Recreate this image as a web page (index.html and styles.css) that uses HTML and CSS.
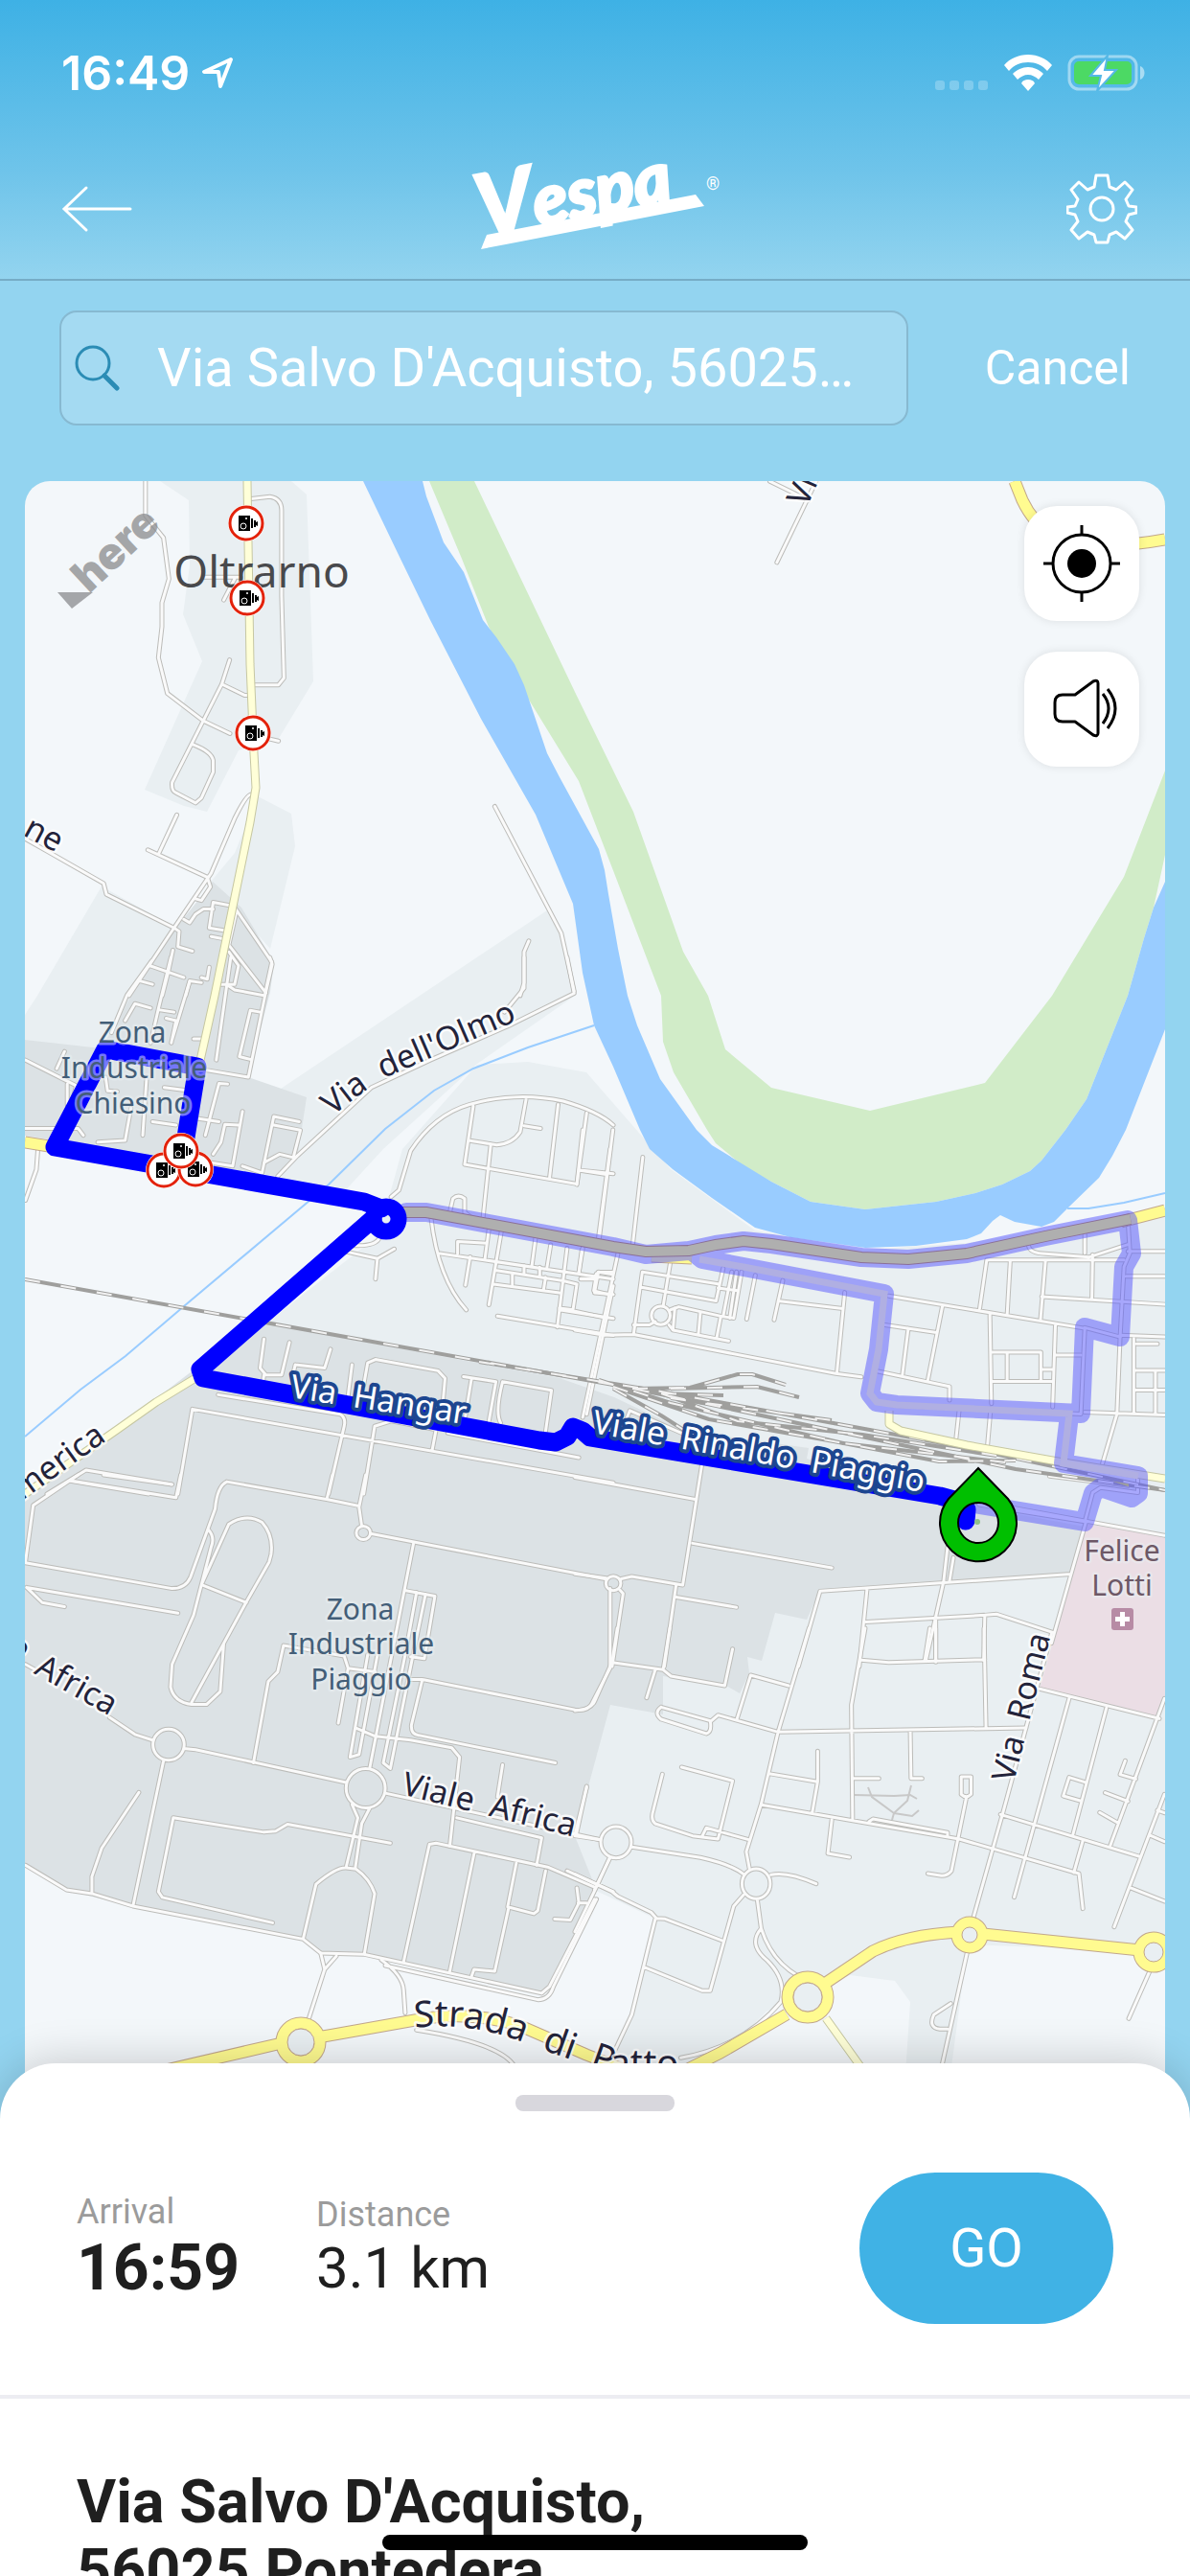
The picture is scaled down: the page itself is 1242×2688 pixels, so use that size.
FILE: index.html
```html
<!DOCTYPE html>
<html lang="en">
<head>
  <meta charset="UTF-8">
  <title>Vespa | Navigation</title>
  <meta name="viewport" content="width=device-width, initial-scale=1.0">
  <link rel="stylesheet" href="styles.css">
</head>
<body>
  <div class="app">
    <header class="header">
      <div class="status">
        <div class="status-left">
          <span>16:49</span>
          <svg width="34" height="34" viewBox="0 0 34 34" fill="none" stroke="#fff" stroke-width="4" stroke-linejoin="round"><path d="M31 3L3 16h15l2 15z"/></svg>
        </div>
        <div class="status-right">
          <svg width="56" height="38" viewBox="0 0 56 38" fill="#fff" fill-opacity=".25"><rect x="0" y="27" width="10" height="10" rx="3"/><rect x="15" y="27" width="10" height="10" rx="3"/><rect x="30" y="27" width="10" height="10" rx="3"/><rect x="45" y="27" width="10" height="10" rx="3"/></svg>
          <svg width="50" height="38" viewBox="0 0 50 38" fill="#fff"><path d="M25 0C15 0 6 4 0 11l5 6c5-6 12-9 20-9s15 3 20 9l5-6C44 4 35 0 25 0z"/><path d="M25 13c-6 0-12 3-16 7l5 6c3-3 7-5 11-5s8 2 11 5l5-6c-4-4-10-7-16-7z"/><path d="M25 26c-3 0-6 1-7 4l7 8 7-8c-1-3-4-4-7-4z"/></svg>
          <svg width="82" height="38" viewBox="0 0 82 38"><rect x="2" y="2" width="70" height="34" rx="10" fill="none" stroke="#fff" stroke-opacity=".45" stroke-width="3"/><path d="M76 12c6 2 6 12 0 14z" fill="#fff" fill-opacity=".5"/><rect x="7" y="7" width="60" height="24" rx="5" fill="#4cd964"/><path d="M42 1L24 22h11l-4 16 20-22H39z" fill="#fff" stroke="#55b8e6" stroke-width="2"/></svg>
        </div>
      </div>
      <div class="navbar">
        <button type="button" class="icon-btn" aria-label="Back">
          <svg width="74" height="50" viewBox="0 0 74 50" fill="none" stroke="#fff" stroke-width="3" stroke-linecap="round"><path d="M72 25H3M26 3L3 25l23 22"/></svg>
        </button>
        <svg class="logo" width="250" height="84" viewBox="0 0 250 84" fill="#fff" role="img" aria-label="Vespa">
          <path d="M10 69L228 27l9 12L4 84z"/>
          <g transform="translate(5 72) rotate(-11)">
            <text class="logo-text"><tspan class="logo-v">V</tspan><tspan>espa</tspan></text>
          </g>
          <text class="logo-reg" x="239" y="22">®</text>
        </svg>
        <button type="button" class="icon-btn" aria-label="Settings">
          <svg width="74" height="74" viewBox="0 0 74 74" fill="none" stroke="#fff" stroke-width="3" stroke-linejoin="round"><path d="M31 2h12l2 12 7 3 9-8 8 8-7 10 3 7 8 1v6l-8 2-3 7 7 9-8 9-9-7-7 3-2 8H31l-2-8-7-3-9 7-8-9 7-9-3-7-8-2v-6l8-1 3-7-7-10 8-8 9 8 7-3z"/><circle cx="37" cy="37" r="12"/></svg>
        </button>
      </div>
    </header>

    <form class="search">
      <label class="search-box" for="destination">
        <svg width="48" height="48" viewBox="0 0 48 48" fill="none" stroke="#2b8cb5" stroke-linecap="round"><circle cx="19" cy="19" r="17" stroke-width="3"/><path d="M31 32l13 13" stroke-width="5"/></svg>
        <input id="destination" type="text" value="Via Salvo D'Acquisto, 56025…" aria-label="Destination">
      </label>
      <button type="button" class="cancel">Cancel</button>
    </form>

    <main class="map">
      <svg class="map-canvas" viewBox="26 503 1190 1677" role="img" aria-label="Route map">
        <defs>
          <!-- streets, one group per map tile -->
          <g id="streets">
            <g transform="translate(0 480) scale(.4082 .3571)">
              <path d="M372 65V165L418 230L432 350L414 420V490L405 580L428 685L520 765L588 802M642 116L690 110Q720 115 720 150V400L726 640L712 660H650M587 587L567 658L440 945Q438 970 450 975L500 1005L515 990L545 915V880Q540 855 495 835M567 658L625 690H640M690 818L712 824M523 345H615M572 412L600 350"/>
              <path d="M452 1040L405 1155M378 1142L530 1222M642 980Q630 980 600 1050L540 1210L445 1370L330 1568M65 1110L130 1152L265 1240L272 1272L445 1370L458 1380L455 1425L492 1438M530 1222L538 1250L515 1290L500 1285M470 1345L485 1355L500 1330L520 1315H545M590 1305L545 1295L535 1370L575 1378M600 1310L695 1470L678 1560M605 1320L585 1420L680 1560M585 1440L610 1480L600 1535H565M442 1435L430 1500L415 1568M382 1480L432 1500L470 1515M358 1525L390 1535M515 1515L530 1520L535 1485M540 1395L572 1402M475 1568L485 1525L515 1530"/>
              <path d="M1265 1015L1435 1385L1468 1555M1352 1408L1340 1440V1530L1330 1568"/>
            </g>
            <g transform="translate(600 480) scale(.4094 .3571)">
              <path d="M515 302L615 65M497 65L595 120"/>
            </g>
            <g transform="translate(0 1000) scale(.4082 .3571)">
              <path d="M690 0L696 20L678 110L635 350L530 330M590 0L580 80L553 300M678 112L600 95L580 80M388 10L325 110L285 220M320 185L345 135L385 148M437 0L405 150L385 250M405 153L445 160M485 70L440 240M425 178L450 185L438 250M665 160L640 155L612 290L640 298M495 238H515M65 300L195 375L180 440M165 275L145 325M172 370V430M65 500H200L213 520M375 350L365 520M335 440L320 535L250 540M420 380L500 392M390 480L450 490M270 350L275 390L300 392M582 370L560 368L525 520M500 470L560 480M620 450L595 610L540 600M610 490L575 488L565 540L545 575M765 480L700 465L670 630L620 610M700 490L768 505L750 585L715 575L675 600M97 560L93 620L65 710"/>
              <path d="M710 640L760 580L950 380L1100 300L1300 200L1468 105L1450 0M1340 0V90L1290 160M1000 700L1020 680L1050 565Q1110 460 1200 430Q1320 390 1440 420Q1530 450 1568 490M1210 435L1188 605L1475 662L1500 455M1345 415L1330 510Q1310 545 1270 548L1198 535M1340 492L1382 500M1427 430L1405 645M1483 622L1568 632M1255 545L1235 760M1150 745L1158 705Q1172 690 1188 705V745L1205 760M1560 560L1530 820"/>
              <path d="M1102 760Q1120 940 1192 1030M885 860L965 880L960 940M965 880L1008 852M905 842Q960 845 970 820M1250 795L1240 880M1125 865L1568 940M1170 865V830L1245 835M1202 875L1190 958M1282 800L1250 1015M1370 815L1360 900M1408 840L1398 910M1450 850L1425 1080M1490 850L1480 920M1270 915L1440 945M1262 955L1430 980M1310 925V955M1340 900V925M1380 905V930M1395 935L1390 970M1475 955L1465 1030L1430 1025M1440 945L1475 955M1568 920H1530L1520 980L1568 985M1485 940H1525M1272 1048L1568 1105M1430 1030L1568 1055M1568 960L1500 1335"/>
              <path d="M675 1115L665 1200L680 1220H720L740 1125M675 1220L673 1235M755 1190L830 1200L845 1145M755 1190L750 1215M890 1280L900 1190M930 1250L940 1185L960 1175L1120 1208L1138 1230L1130 1330M1185 1225L1268 1240L1250 1355M1205 1235L1190 1340M1285 1240L1410 1265L1395 1385M1285 1240Q1265 1330 1280 1360M558 1278L870 1335Q885 1345 880 1370L840 1568M455 1568L492 1320L1568 1535M930 1568L958 1370L1000 1355L1115 1380L1105 1440M1145 1390L1480 1462M120 1568L220 1498L440 1540M180 1530L380 1568"/>
            </g>
            <g transform="translate(600 1180) scale(.4094 .3571)">
              <path d="M20 0L5 160M10 118L80 130M97 0L62 318M173 80L147 340M110 360L20 840M18 350L10 420M15 435H45L60 415L97 422M55 420L48 470L90 482M0 530L80 550M0 585L75 600L150 598L665 712L730 722M150 595L172 415L365 450M170 460L360 500L378 405M243 390L225 515M400 415L378 545M412 415L395 550M425 415L405 550L375 545M365 462L415 470M460 425L438 553M530 440L508 555M518 500L683 522M195 542a24 27 0 1 0 48 0a24 27 0 1 0-48 0M150 570H190L205 560M240 570L250 585L392 617M245 525L265 517L375 545M255 520L250 585M320 532L315 595M372 545L362 605"/>
              <path d="M688 475L668 710M770 705L955 750V790M790 570L922 592M850 580L835 715M937 515L900 730M800 485L1300 580M1050 380L1032 522M1110 380L1102 540M1200 380L1187 555M1050 380H1400M1320 365L1318 495M1190 487L1503 510M1157 340Q1160 360 1200 362L1310 372L1410 335M1300 305V360M1410 355H1503M1405 428H1503M1058 540L1062 800M1065 650H1188V700H1218M1102 652V730M1062 735H1215M1188 700V730M1225 570L1218 810M1225 658H1290M1390 600L1503 605M1390 605L1382 830L1345 975M1425 610V830M1430 703H1503M1430 760H1503M1480 703V830M1300 825L1503 833M980 815L972 900M1060 815L1052 920M1432 625H1485M1210 1012L1410 1040"/>
              <path d="M1410 265L1415 360L1400 400L1390 605L1300 578L1290 830L820 805L770 795L752 770L775 640L788 480L430 400L325 378M1260 835L1245 975L1435 1010V1060L1340 1045L1320 1060L1300 1145L1030 1095"/>
              <path d="M1120 1105L1503 1185M0 1015L310 1080M325 970L275 1330M300 1208L655 1280M0 1297L80 1310M79 1325a19 21 0 1 0 38 0a19 21 0 1 0-38 0M118 1312L145 1305L275 1330M115 1345L123 1355L95 1568M258 1330L228 1568M258 1365L412 1395M950 1220L940 1320L895 1550M965 1250L955 1318M570 1568L625 1348L1265 1298M745 1340L725 1568M742 1438L1045 1418L1075 1415L1222 1470M920 1425V1555M1045 1420L1042 1550M1303 1145L1215 1500M280 890L140 820L130 850"/>
            </g>
            <g transform="translate(0 1540) scale(.4082 .3954)">
              <path d="M65 230L85 80L200 0M180 15L450 60L462 0M265 0L438 25M65 232L440 300Q475 300 487 270L550 90Q555 30 580 18L838 65L918 82M850 0L836 62M935 0L918 85L925 135M911 153a18 18 0 1 0 36 0a18 18 0 1 0-36 0M947 155L1550 275M533 145Q550 165 540 190L515 290L495 370L440 500L436 560Q445 600 490 606H528L563 572L572 445M515 290L585 130Q630 100 670 125Q700 160 693 210L688 230L630 335L490 600M515 290L630 337M68 297L455 365M68 297L108 337L165 348"/>
              <path d="M725 450L710 520L686 545L648 760M725 450L880 478L890 510L865 655M1057 182L945 775M1035 305L1112 320L1085 485L1050 480M1065 310L1035 480M1088 315L1055 480M940 475L895 745L918 738L965 475M890 510L960 520M1035 480L980 760L998 775L1055 480M910 668L960 690L1050 700L1155 720L1175 745L1150 980M1045 540H1080L1470 620Q1505 625 1515 600L1560 510V300M1080 540L1052 660Q1050 685 1070 687L1420 760"/>
              <path d="M65 500L100 520M280 640L345 685L390 700M391 712a40 41 0 1 0 80 0a40 41 0 1 0-80 0M470 722L500 725L885 812M885 827a50 52 0 1 0 100 0a50 52 0 1 0-100 0M985 840L1535 963M1168 905L1385 958L1372 1030M1285 765L1272 850M1500 825L1470 950M418 755L340 1138M355 838L260 985L235 1060V1105M65 1030L170 1095L235 1105L340 1138L775 1225L820 1262L930 1265L1385 1368L1405 1350L1520 1120M675 943L705 940L735 922L998 972M675 943L443 905L405 1100L415 1115L697 1182M900 870L915 905L885 1035M945 880L925 920L908 1040M775 1225L808 1080Q860 1035 885 1037L910 1040Q945 1065 958 1105L932 1262"/>
              <path d="M820 1262L830 1305L860 1270M830 1305L788 1440M975 1280Q1030 1320 1032 1360L1036 1420M985 1295L1375 1385Q1405 1385 1415 1350L1525 1120M1032 1285L1098 975L1115 972L1400 1035L1520 1088M1212 1000L1150 1310M1320 1025L1298 1140L1365 1158L1375 1150L1395 1045M1300 1145L1265 1310L1212 1305L1205 1325M1475 1090L1480 1130L1458 1175L1418 1172M1478 1130H1500M1450 1045L1568 1100M1560 1010L1520 1095M1065 1465Q1280 1500 1315 1560"/>
            </g>
            <g transform="translate(600 1700) scale(.4094 .3333)">
              <path d="M108 0L95 105L50 230Q40 255 0 258M242 0L225 130M95 107L225 130L245 150L382 180L402 65M205 130L183 218M220 247L345 290Q350 325 335 330L220 285Q200 265 220 247M348 290L365 272L518 325L1150 312M597 0L518 325L475 550L437 700L445 752M545 180L448 147L413 285M740 0L705 240L708 600M730 100L800 107L1045 98M905 0L892 100M920 0V100M1043 0L1048 308M272 435L402 478L365 660L300 650L205 612Q192 600 200 570L223 457M325 650L335 625L443 662M495 455L615 480M619 385V480L605 578M475 553L980 660L1285 768L1295 878M710 470H775M855 318L857 470H885M655 600L645 705L700 717M750 605L760 597L950 640V650M985 520V465H1010V520Q998 535 985 520M998 530L960 760Q950 775 935 775L900 768"/>
              <path d="M1215 18L1150 312L1090 583L1015 910M1085 583L1440 715M1260 220L1120 842M1355 250L1270 645M1185 190L1490 283M1503 220L1365 680M1300 482L1260 467L1245 525L1288 540M1403 415L1390 458L1430 472M1352 515L1410 542M1338 577L1385 610M1503 520L1375 935M1465 648L1503 668M1415 812L1503 855M1295 665L1272 765M1485 570L1503 578M66 670a39 49 0 1 0 78 0a39 49 0 1 0-78 0M426 800a36 47 0 1 0 72 0a36 47 0 1 0-72 0M0 650L65 662M30 495L3 650M145 685L320 718Q400 740 430 770M500 772Q540 760 615 800M90 715L55 810L0 950M0 770L95 825L110 840L195 890L208 908L230 910L375 978M205 910L145 1210L95 1340M430 835L405 870L345 1135H325L175 1060M465 850L475 940Q500 1040 570 1090M475 940Q440 990 490 1040Q540 1100 525 1170Q430 1310 270 1345M1000 1015L937 1362M958 1175L915 1210Q900 1250 930 1255H950M1465 1075L1412 1222"/>
            </g>
          </g>
          <path id="park-paths" d="M892 1874L933 1875L950 1874L957 1878M906 1866L910 1876L933 1893L947 1880L951 1864M933 1893L931 1900M933 1893L952 1896L959 1890"/>

          <path id="pale-roads" d="M258 503L261 694L265 787L267 823L261 859L245 937L224 1040L208 1112M204 1439L163 1464L122 1493L26 1560M928 1473V1487L940 1494L1009 1509L1104 1526L1216 1544M862 2107L900 2160"/>
          <g id="yellow-roads">
            <path d="M26 1193L57 1198M1059 503L1067 523Q1090 572 1150 571Q1190 569 1216 564M1170 1276L1216 1264M680 1312L722 1314"/>
            <path d="M160 2164L294 2133L343 2125L433 2109Q490 2098 543 2115L612 2145L660 2164H710L752 2143L821 2103M862 2070L911 2037Q945 2020 1001 2017"/>
            <path d="M1026 2019L1190 2036"/>
            <circle cx="314" cy="2132" r="20"/>
            <circle cx="843" cy="2085" r="21"/>
            <circle cx="1012" cy="2020" r="13"/>
            <circle cx="1204" cy="2038" r="15"/>
          </g>

          <g id="rails">
            <path d="M26 1336L640 1446L700 1458L1060 1534L1216 1556"/>
            <path d="M500 1422L690 1453L810 1475L1000 1510L1216 1556M625 1441L700 1465L880 1507L1050 1527M640 1448L740 1482L870 1505L980 1526L1060 1525M690 1455L770 1484L900 1498L1040 1520M660 1450L720 1449L770 1435H785L820 1446M700 1450L790 1448L834 1459M690 1455L755 1457M700 1460L868 1483M640 1450L690 1478L715 1494"/>
          </g>

          <g id="camera">
            <circle r="19" fill="#fff"/>
            <circle r="17" fill="#fff" stroke="#e3220a" stroke-width="3"/>
            <path d="M-8-8H4V8H-8z"/>
            <circle cx="-3" cy="3" r="3" fill="#000" stroke="#fff" stroke-width="1"/>
            <circle cx="0" cy="-5" r="1" fill="#fff"/>
            <path d="M5-5H7V5H5zM8-3H10V4H8zM10-1L12-2V3L10 2z"/>
          </g>

          <path id="olmo" d="M347 1166Q375 1142 401 1126L535 1068"/>
          <path id="hangar" d="M302 1459L504 1490"/>
          <path id="rinaldo" d="M617 1496L984 1562"/>
          <path id="africa-left" d="M-39 1688L42 1751L140 1806"/>
          <path id="africa-right" d="M418 1873L624 1924"/>
          <path id="strada" d="M433 2117Q490 2110 545 2132L640 2166L760 2168"/>
          <path id="america" d="M23 1567L80 1526L140 1484"/>
        </defs>

        <!-- land -->
        <rect x="26" y="503" width="1190" height="1677" fill="#f3f7fa"/>
        <g fill="#e9eff2">
          <path d="M167 503L197 523L198 591L191 642L211 691L151 825L192 842L216 848L249 784L290 773L327 712L320 517L304 503z"/>
          <path d="M269 832L304 850L308 884L282 991L220 921L245 891z"/>
          <path d="M106 926L184 969L118 1100L26 1086V1060L39 1040z"/>
          <path d="M290 1139L571 951L584 973L600 1040L498 1111L400 1200L345 1260L294 1229z"/>
          <path d="M395 1290L420 1200L498 1112L551 1109L612 1120L700 1221L788 1285L903 1305L1009 1298L1216 1265V2038L1010 2030L990 2180H944L950 2090L934 2068L887 2062L800 2100L720 2180H630L657 2103L682 2002L620 1973L570 2075L26 1900V1580L204 1440z"/>
        </g>
        <g fill="#dce2e5">
          <path d="M222 921L252 948L286 1005L282 1036L259 1125L320 1146L310 1211L292 1229L26 1186V1086L106 1095L159 1000L184 969z"/>
          <path d="M204 1429L261 1379L449 1414L584 1439L641 1459L715 1494L844 1512L842 1523L981 1566L1132 1594L1118 1644L856 1660L842 1691L809 1684L795 1734L780 1730L782 1747L772 1768L758 1760L692 1750V1790L637 1780L600 1917L620 1967V1983L567 2082L380 2040H335L316 2024L139 1991L69 1973L26 1947V1565z"/>
        </g>
        <path fill="#ebdee5" d="M1134 1591L1216 1605V1775L1210 1792L1085 1763z"/>

        <!-- river Arno -->
        <path fill="#d1ecc8" d="M448 503L482 584L510 655L547 723L604 816L641 912L690 1040L692 1088L703 1120L738 1180L747 1194L776 1218L805 1234L846 1255L903 1263L977 1255L1018 1246L1046 1237L1075 1223L1087 1212L1112 1180L1134 1148L1177 1040L1194 980L1204 948L1216 893V805L1173 916L1098 1040L1028 1131L908 1160L805 1136L757 1096L739 1040L713 994L661 848L600 723L495 503z"/>
        <path fill="#99ccff" d="M379 503L416 580L449 648L502 751L559 851L598 944L608 1016L620 1071L640 1114L668 1180L678 1200L702 1221L743 1251L788 1282L825 1292L903 1303L956 1301L1009 1294L1024 1288L1036 1275L1044 1269L1059 1276L1087 1281L1100 1276L1116 1260L1147 1230L1161 1207L1175 1180L1216 1075V921L1204 948L1194 980L1177 1040L1134 1148L1112 1180L1087 1212L1075 1223L1046 1237L1018 1246L977 1255L903 1263L846 1255L805 1234L743 1196L727 1180L689 1127L665 1071L655 1040L645 991L635 934L631 909L625 887L584 812L571 787L547 716L537 694L518 666L504 648L484 598L463 567L445 519L441 503z"/>
        <path fill="none" stroke="#99ccff" stroke-width="2" d="M620 1071L551 1094L494 1116L453 1139L402 1179L343 1237L192 1364L131 1416L84 1451L26 1500M1114 1262H1136L1173 1256L1216 1246"/>

        <!-- roads -->
        <use href="#park-paths" class="footpath"/>
        <use href="#streets" class="street-casing"/>
        <use href="#streets" class="street"/>
        <use href="#rails" class="rail"/>
        <use href="#rails" class="rail-gap"/>
        <use href="#pale-roads" class="pale-casing"/>
        <use href="#pale-roads" class="pale"/>
        <use href="#yellow-roads" class="yellow-casing"/>
        <use href="#yellow-roads" class="yellow"/>
        <g fill="#e9eff2" stroke="#c2a78c">
          <circle cx="314" cy="2132" r="14"/>
          <circle cx="843" cy="2085" r="15"/>
          <circle cx="1012" cy="2020" r="8"/>
          <circle cx="1204" cy="2038" r="10"/>
        </g>

        <!-- alternative routes -->
        <g class="alt-route">
          <path d="M424 1266H445L640 1302L674 1310L719 1306L747 1300L776 1296L805 1299L899 1313L948 1315L1009 1309L1091 1291L1177 1274L1181 1309L1173 1323L1169 1396L1132 1386L1128 1476L936 1467L915 1464L908 1455L917 1409L923 1351L776 1323L733 1315L722 1306"/>
          <path d="M1116 1478L1110 1528L1188 1541V1559L1181 1564L1149 1553L1141 1559L1132 1589L1022 1571"/>
        </g>
        <path class="alt-edge" d="M410 1266H445L640 1302L674 1307L719 1306L747 1300L776 1296L805 1299L899 1313L948 1315L1009 1309L1091 1291L1180 1273"/>
        <path class="alt-core" d="M410 1266H445L640 1302L674 1307L719 1306L747 1300L776 1296L805 1299L899 1313L948 1315L1009 1309L1091 1291L1180 1273"/>
        <path class="alt-minor" d="M730 1315L776 1323L923 1351L917 1409L908 1455L915 1464L936 1467L1116 1476L1110 1528L1188 1541"/>

        <!-- active route -->
        <g class="route">
          <path d="M192 1200L206 1114L110 1096L57 1198L380 1255L398 1262"/>
          <circle cx="403" cy="1273" r="13"/>
          <path d="M389 1273L209 1430L212 1439L563 1504L580 1506L592 1500L598 1490L608 1494L616 1501L981 1562L1003 1568L1009 1576L1008 1588"/>
        </g>

        <!-- place names -->
        <text class="town" x="273" y="614" text-anchor="middle">Oltrarno</text>
        <g class="zone">
          <text x="138" y="1089">Zona</text>
          <text x="140" y="1126">Industriale</text>
          <text x="139" y="1163">Chiesino</text>
          <text x="376" y="1691">Zona</text>
          <text x="377" y="1727">Industriale</text>
          <text x="377" y="1764">Piaggio</text>
        </g>
        <g class="zone poi">
          <text x="1171" y="1630">Felice</text>
          <text x="1171" y="1666">Lotti</text>
        </g>
        <rect x="1160" y="1679" width="23" height="23" rx="3" fill="#b78ba5"/>
        <path fill="#fff" d="M1169 1683h5v5h5v5h-5v5h-5v-5h-5v-5h5z"/>

        <!-- road names -->
        <g class="road-name">
          <text><textPath href="#olmo">Via  dell'Olmo</textPath></text>
          <text><textPath href="#africa-left">Viale  Africa</textPath></text>
          <text><textPath href="#africa-right">Viale  Africa</textPath></text>
          <text><textPath href="#america">merica</textPath></text>
          <text transform="translate(1058 1862) rotate(-76)">Via  Roma</text>
          <text transform="translate(23 872) rotate(28)">ne</text>
          <text transform="translate(842 531) rotate(-66)">Via</text>
          <text class="big"><textPath href="#strada">Strada  di  Patto</textPath></text>
        </g>
        <g class="road-name on-route">
          <text><textPath href="#hangar">Via  Hangar</textPath></text>
          <text><textPath href="#rinaldo">Viale  Rinaldo  Piaggio</textPath></text>
        </g>

        <use href="#camera" x="257" y="547"/>
        <use href="#camera" x="258" y="625"/>
        <use href="#camera" x="264" y="766"/>
        <use href="#camera" x="171" y="1222"/>
        <use href="#camera" x="204" y="1221"/>
        <use href="#camera" x="189" y="1202"/>

        <!-- destination -->
        <circle cx="1020" cy="1589" r="3" fill="#8fbf8a"/>
        <path fill="#00bf00" stroke="#000" stroke-width="2" fill-rule="evenodd" d="M1021 1533L990 1565A40 40 0 1 0 1052 1565zM1021 1569a21 21 0 1 1 0 42a21 21 0 1 1 0-42z"/>

        <g fill="#8a8b8d" fill-opacity=".75">
          <text class="here" transform="translate(93 621) rotate(-43)">here</text>
          <path d="M60 619H97L75 636z"/>
        </g>
      </svg>

      <div class="map-controls">
        <button type="button" aria-label="Center on my position">
          <svg width="80" height="80" viewBox="0 0 80 80" fill="none" stroke="#000" stroke-width="3"><circle cx="40" cy="40" r="30"/><circle cx="40" cy="40" r="15" fill="#000" stroke="none"/><path d="M40 0v10M40 70v10M0 40h10M70 40h10"/></svg>
        </button>
        <button type="button" aria-label="Voice guidance">
          <svg width="80" height="80" viewBox="0 0 80 80" fill="none" stroke="#000" stroke-width="3" stroke-linejoin="round"><path d="M20 25h13l19-14q5-2 5 2v52q0 4-5 2L33 53H20q-8 0-8-8V33q0-8 8-8z"/><path d="M62 24q12 15 0 31M67 19q16 20 0 41"/></svg>
        </button>
      </div>
    </main>

    <section class="sheet">
      <div class="handle"></div>
      <div class="summary">
        <div class="fact">
          <span class="fact-label">Arrival</span>
          <strong class="arrival">16:59</strong>
        </div>
        <div class="fact">
          <span class="fact-label">Distance</span>
          <span class="distance">3.1 km</span>
        </div>
        <button type="button" class="go">GO</button>
      </div>
      <h1 class="address">Via Salvo D'Acquisto,<br>56025 Pontedera</h1>
    </section>

    <div class="home-indicator"></div>
  </div>
</body>
</html>
```
FILE: styles.css
```css
* {
  box-sizing: border-box;
}

body {
  margin: 0;
  background: #93d4f0;
  font-family: Roboto, sans-serif;
}

button {
  border: none;
  background: none;
  padding: 0;
  font-family: inherit;
  cursor: pointer;
}

svg {
  display: block;
}

.app {
  position: relative;
  height: 100vh;
  overflow: hidden;
}

/* Header */
.header {
  background: linear-gradient(#3eb1e5, #6fc4ea 62%, #93d4ef);
  border-bottom: 2px solid #76acc6;
  padding: 46px 46px 31px 64px;
}

.status,
.status-left,
.status-right,
.navbar {
  display: flex;
  align-items: center;
}

.status,
.navbar {
  justify-content: space-between;
}

.status-left {
  gap: 12px;
  color: #fff;
  font: 600 50px/60px Inter, sans-serif;
}

.status-right {
  gap: 16px;
}

.navbar {
  margin-top: 70px;
  padding-right: 9px;
}

.logo {
  margin-right: 6px;
  overflow: visible;
}

.logo-text {
  font: italic 900 74px Lato, sans-serif;
  stroke: #fff;
  stroke-width: 3px;
}

.logo-v {
  font-size: 90px;
}

.logo-reg {
  font: 18px Roboto, sans-serif;
}

/* Search */
.search {
  display: flex;
  align-items: center;
  justify-content: space-between;
  gap: 60px;
  padding: 31px 62px 58px;
}

.search-box {
  display: flex;
  align-items: center;
  flex: 1;
  max-width: 886px;
  height: 120px;
  padding: 0 14px;
  gap: 38px;
  background: #a4daf2;
  border: 2px solid #87b9d1;
  border-radius: 18px;
}

.search-box svg {
  flex: none;
}

.search-box input {
  flex: 1;
  min-width: 0;
  padding: 0;
  border: none;
  outline: none;
  background: none;
  color: #fff;
  font: 56px/66px Roboto, sans-serif;
  text-overflow: ellipsis;
}

.cancel {
  color: #fff;
  font-size: 50px;
  line-height: 60px;
}

/* Map */
.map {
  position: relative;
  margin: 0 26px;
  border-radius: 26px 26px 0 0;
  overflow: hidden;
}

.map-canvas {
  width: 100%;
  height: auto;
}

#streets path {
  vector-effect: non-scaling-stroke;
}

#yellow-roads,
#pale-roads,
#rails {
  stroke-linejoin: round;
}

.footpath {
  fill: none;
  stroke: #c8c8c8;
  stroke-width: 2px;
}

.street-casing,
.street {
  fill: none;
  stroke: #bcbcb9;
  stroke-width: 5px;
  stroke-linecap: round;
  stroke-linejoin: round;
}

.street {
  stroke: #fafafa;
  stroke-width: 3px;
}

.rail,
.rail-gap {
  fill: none;
  stroke: #9f9f9d;
  stroke-width: 4px;
}

.rail-gap {
  stroke: #f2f2f2;
  stroke-width: 2px;
  stroke-dasharray: 16 22;
}

.pale-casing,
.pale {
  fill: none;
  stroke: #c6c7a2;
  stroke-width: 9px;
}

.pale {
  stroke: #ffffd8;
  stroke-width: 7px;
}

.yellow-casing,
.yellow {
  fill: none;
  stroke: #c2a78c;
  stroke-width: 13px;
}

.yellow {
  stroke: #fffb90;
  stroke-width: 11px;
}

.alt-route {
  fill: none;
  stroke: #5656ff;
  stroke-width: 20px;
  stroke-linejoin: round;
  stroke-linecap: round;
  opacity: 0.5;
}

.alt-edge,
.alt-core,
.alt-minor {
  fill: none;
  stroke: #8a6f98;
  stroke-width: 12px;
}

.alt-core {
  stroke: #afafaf;
  stroke-width: 10px;
}

.alt-minor {
  stroke: #b0afe2;
  stroke-width: 7px;
}

.route {
  fill: none;
  stroke: #00f;
  stroke-width: 19px;
  stroke-linejoin: round;
  stroke-linecap: round;
}

.route circle {
  stroke-width: 17px;
}

.map text {
  font-family: "Noto Sans", sans-serif;
  white-space: pre;
  paint-order: stroke;
  stroke-linejoin: round;
}

.town {
  font-size: 46px;
  fill: #48494c;
}

.zone {
  font-size: 30px;
  fill: #435e78;
  stroke: rgba(233, 239, 242, 0.5);
  stroke-width: 5px;
  text-anchor: middle;
}

.poi {
  fill: #6d5866;
}

.road-name {
  font-size: 34px;
  fill: #23233a;
  stroke: rgba(255, 255, 255, 0.8);
  stroke-width: 5px;
}

.road-name .big {
  font-size: 38px;
}

.on-route {
  fill: #fff;
  stroke: #1d4690;
  stroke-width: 8px;
}

.map .here {
  font: 900 46px Inter, sans-serif;
}

.map-controls {
  position: absolute;
  top: 26px;
  right: 27px;
  display: flex;
  flex-direction: column;
  gap: 32px;
}

.map-controls button {
  display: flex;
  align-items: center;
  justify-content: center;
  width: 120px;
  height: 120px;
  background: #fff;
  border-radius: 34px;
  box-shadow: 0 0 10px rgba(0, 0, 0, 0.1);
}

/* Bottom sheet */
.sheet {
  position: relative;
  margin-top: -26px;
  padding-top: 33px;
  background: #fff;
  border-radius: 58px 58px 0 0;
  box-shadow: 0 0 48px rgba(0, 0, 0, 0.2);
}

.handle {
  width: 166px;
  height: 17px;
  margin: 0 auto;
  border-radius: 8px;
  background: #d8d7dd;
}

.summary {
  display: flex;
  align-items: center;
  gap: 80px;
  padding: 64px 80px 74px;
  border-bottom: 4px solid #ededf2;
}

.fact {
  display: flex;
  flex-direction: column;
}

.fact-label {
  color: #9b9b9b;
  font-size: 36px;
  line-height: 42px;
}

.arrival {
  color: #1f1f1f;
  font-size: 66px;
  line-height: 76px;
}

.distance {
  color: #1f1f1f;
  font-size: 60px;
  line-height: 70px;
}

.go {
  width: 265px;
  height: 158px;
  margin-left: auto;
  border-radius: 79px;
  background: #40b2e5;
  color: #fff;
  font-size: 56px;
}

.address {
  margin: 0;
  padding: 72px 80px;
  color: #1f1f1f;
  font-size: 63px;
  line-height: 72px;
}

.home-indicator {
  position: absolute;
  bottom: 27px;
  left: 50%;
  width: 444px;
  height: 16px;
  border-radius: 8px;
  background: #000;
  transform: translateX(-50%);
}
```
